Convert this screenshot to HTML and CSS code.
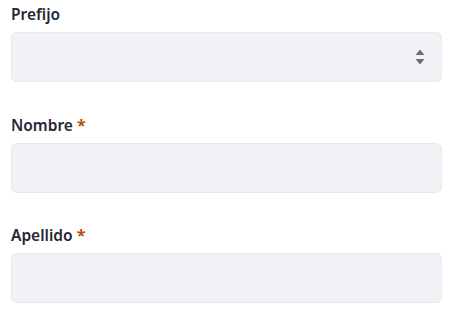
FILE: index.html
```html
<!DOCTYPE html>
<html lang="es">
<head>
<meta charset="utf-8">
<title>Formulario</title>
<link rel="stylesheet" href="styles.css">
</head>
<body>
<form class="form">
  <div class="field">
    <label class="label" for="prefijo">Prefijo</label>
    <div class="select">
      <select id="prefijo" class="control"></select>
      <svg class="caret" width="10" height="16" viewBox="0 0 10 16" aria-hidden="true">
        <path d="M5 0.5 L9.5 6 H0.5 Z" fill="#6b6c7e"/>
        <path d="M5 15.5 L9.5 10 H0.5 Z" fill="#6b6c7e"/>
      </svg>
    </div>
  </div>
  <div class="field">
    <label class="label" for="nombre">Nombre <span class="req">*</span></label>
    <input id="nombre" class="control" type="text">
  </div>
  <div class="field">
    <label class="label" for="apellido">Apellido <span class="req">*</span></label>
    <input id="apellido" class="control" type="text">
  </div>
</form>
</body>
</html>
```
FILE: styles.css
```css
html, body {
  margin: 0;
  padding: 0;
  background: #ffffff;
}
body {
  font-family: "Noto Sans", "Open Sans", sans-serif;
  color: #272833;
}
.form {
  padding: 3px 21px 0 11px;
  display: flex;
  flex-direction: column;
  gap: 31.5px;
}
.field {
  display: flex;
  flex-direction: column;
  gap: 7px;
}
.label {
  font-size: 15.5px;
  line-height: 22px;
  font-weight: 600;
  color: #272833;
}
.req {
  color: #b95000;
  font-weight: 700;
  font-size: 16px;
}
.select {
  position: relative;
}
.control {
  display: block;
  box-sizing: border-box;
  width: 100%;
  height: 50px;
  margin: 0;
  padding: 0 16px;
  background: #f1f2f5;
  border: 1px solid #e7e7ed;
  border-radius: 6px;
  font: inherit;
  color: #272833;
  -webkit-appearance: none;
  appearance: none;
  outline: none;
}
.caret {
  position: absolute;
  right: 17px;
  top: 17px;
  pointer-events: none;
}
```
